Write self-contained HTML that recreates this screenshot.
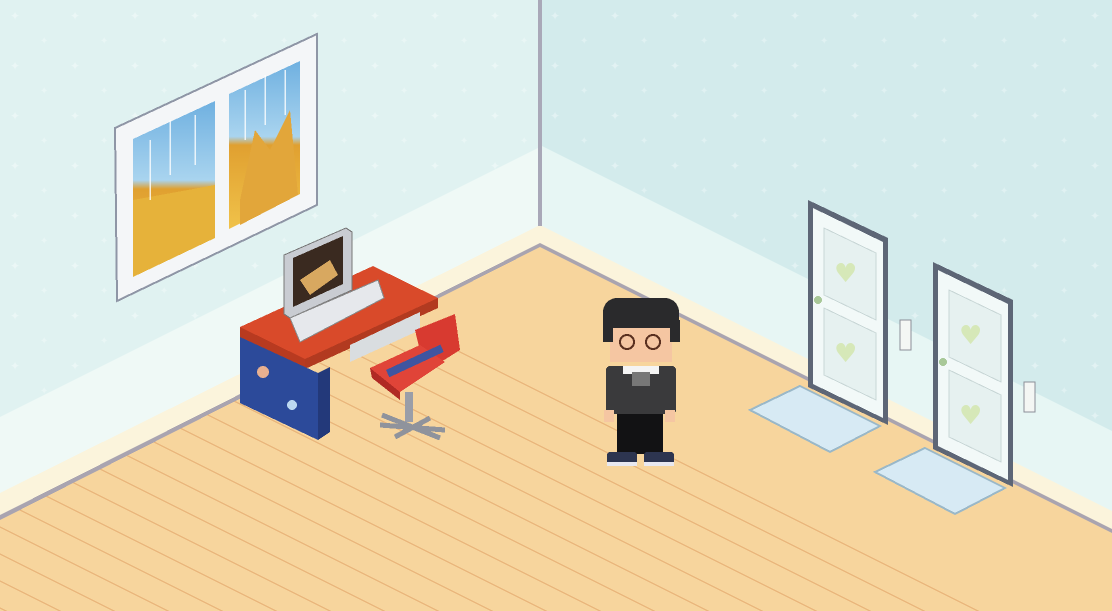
<!DOCTYPE html>
<html><head><meta charset="utf-8"><style>
html,body{margin:0;padding:0;width:1112px;height:611px;overflow:hidden;background:#f7d59d}
svg{display:block;position:absolute;left:0;top:0}
</style></head><body>
<svg width="1112" height="611" viewBox="0 0 1112 611" xmlns="http://www.w3.org/2000/svg" shape-rendering="crispEdges">
<defs>
<pattern id="stars" width="60" height="50" patternUnits="userSpaceOnUse">
<text x="10" y="20" font-size="12" fill="#ffffff" opacity="0.35" font-family="DejaVu Sans">✦</text>
<text x="40" y="44" font-size="10" fill="#ffffff" opacity="0.3" font-family="DejaVu Sans">✦</text>
</pattern>
<linearGradient id="sky" x1="0" y1="0" x2="0" y2="1"><stop offset="0" stop-color="#6fb0e0"/><stop offset="0.45" stop-color="#a9d4ef"/><stop offset="0.5" stop-color="#e0a030"/><stop offset="1" stop-color="#f0c24a"/></linearGradient>
</defs>
<rect x="0" y="0" width="1112" height="611" fill="#f7d59d"/>
<g stroke="#e9b47a" stroke-width="1.5" opacity="0.9">
<path d="M-600 200 L1200 1100 M-600 227 L1200 1127 M-600 254 L1200 1154 M-600 281 L1200 1181 M-600 308 L1200 1208 M-600 335 L1200 1235 M-600 362 L1200 1262 M-600 389 L1200 1289 M-600 416 L1200 1316 M-600 443 L1200 1343 M-600 470 L1200 1370 M-600 497 L1200 1397 M-600 524 L1200 1424 M-600 173 L1200 1073 M-600 146 L1200 1046 M-600 119 L1200 1019 M-600 92 L1200 992 M-600 65 L1200 965 M-600 38 L1200 938 M-600 11 L1200 911 M-600 -16 L1200 884 M-600 -43 L1200 857 M-600 -70 L1200 830 M-600 -97 L1200 803 M-600 -124 L1200 776 M-600 -151 L1200 749 M-600 -178 L1200 722"/>
</g>
<polygon points="0,0 540,0 540,245 0,518" fill="#eff9f6"/>
<polygon points="0,0 540,0 540,147 0,417" fill="#e0f2f1"/>
<polygon points="0,0 540,0 540,147 0,417" fill="url(#stars)"/>
<polygon points="0,493 540,225 540,245 0,518" fill="#fbf4dc"/>
<polygon points="0,515 540,243 540,247 0,520" fill="#a9a4b0"/>
<polygon points="540,0 1112,0 1112,531 540,245" fill="#e7f6f4"/>
<polygon points="540,0 1112,0 1112,431 540,145" fill="#d3ebec"/>
<polygon points="540,0 1112,0 1112,431 540,145" fill="url(#stars)"/>
<polygon points="540,225 1112,511 1112,531 540,245" fill="#fbf4dc"/>
<polygon points="540,243 1112,529 1112,533 540,247" fill="#a9a4b0"/>
<rect x="538" y="0" width="4" height="226" fill="#a9a8b8"/>
<polygon points="115,128 317,34 317,205 117,301" fill="#f4f6f8" stroke="#8f96a6" stroke-width="2"/>
<polygon points="133,139 215,101 215,238 133,277" fill="url(#sky)"/>
<polygon points="229,94 300,61 300,194 229,229" fill="url(#sky)"/>
<polygon points="240,200 255,130 270,150 290,110 298,195 240,225" fill="#e2a63a"/>
<polygon points="133,200 215,185 215,238 133,277" fill="#e6b23a"/>
<g stroke="#ffffff" stroke-width="1.5" opacity="0.8"><path d="M150 140 V200 M170 120 V175 M195 115 V165 M245 90 V140 M265 75 V125 M285 70 V115"/></g>
<polygon points="240,327 373,266 438,298 305,359" fill="#d94a2a"/>
<polygon points="240,327 305,359 305,369 240,337" fill="#b83a20"/>
<polygon points="305,359 438,298 438,308 305,369" fill="#b23a20"/>
<polygon points="240,337 318,373 318,440 240,403" fill="#2c4a9a"/>
<circle cx="263" cy="372" r="6" fill="#e8b090"/>
<circle cx="292" cy="405" r="5" fill="#bcd8f0"/>
<polygon points="318,373 330,367 330,432 318,440" fill="#23397a"/>
<polygon points="350,345 420,312 420,330 350,362" fill="#d9dde0"/>
<polygon points="284,255 346,228 352,232 352,290 290,318 284,314" fill="#c9ccd2" stroke="#777" stroke-width="1"/>
<polygon points="293,258 343,236 343,284 293,307" fill="#3a2a20"/>
<polygon points="300,280 330,260 338,275 310,295" fill="#d8a860"/>
<polygon points="290,318 378,280 384,298 300,342" fill="#e6e8ec" stroke="#888" stroke-width="1"/>
<polygon points="415,330 455,314 460,350 425,372" fill="#d83a30"/>
<polygon points="370,368 420,345 445,362 400,392" fill="#e04438"/>
<polygon points="370,368 400,392 400,400 372,378" fill="#b02a24"/>
<rect x="386" y="370" width="60" height="8" fill="#3f55a0" transform="rotate(-25 386 370)"/>
<rect x="405" y="392" width="8" height="30" fill="#9a9ea8"/>
<path d="M380 425 L445 430 M395 437 L430 418 M382 415 L440 438" stroke="#8f939c" stroke-width="5"/>
<rect x="603" y="298" width="76" height="40" rx="14" fill="#2a2a2c"/>
<rect x="610" y="320" width="62" height="42" fill="#f5c6a2"/>
<rect x="603" y="320" width="10" height="22" fill="#2a2a2c"/>
<rect x="670" y="320" width="10" height="22" fill="#2a2a2c"/>
<rect x="610" y="318" width="62" height="10" fill="#2a2a2c"/>
<circle cx="627" cy="342" r="7" fill="none" stroke="#5a3020" stroke-width="2"/>
<circle cx="653" cy="342" r="7" fill="none" stroke="#5a3020" stroke-width="2"/>
<rect x="606" y="366" width="70" height="48" rx="4" fill="#3a3a3c"/>
<rect x="623" y="366" width="36" height="8" fill="#f4f4f4"/>
<rect x="632" y="372" width="18" height="14" fill="#777"/>
<rect x="604" y="410" width="10" height="12" fill="#f5c6a2"/>
<rect x="665" y="410" width="10" height="12" fill="#f5c6a2"/>
<rect x="617" y="414" width="46" height="40" fill="#121214"/>
<rect x="607" y="452" width="30" height="14" rx="3" fill="#2d3550"/>
<rect x="644" y="452" width="30" height="14" rx="3" fill="#2d3550"/>
<rect x="607" y="462" width="30" height="4" fill="#e8e8f0"/>
<rect x="644" y="462" width="30" height="4" fill="#e8e8f0"/>
<polygon points="750,410 800,386 880,426 830,452" fill="#d7eaf4" stroke="#9ab8c8" stroke-width="2"/>
<polygon points="875,472 925,448 1005,488 955,514" fill="#d7eaf4" stroke="#9ab8c8" stroke-width="2"/>
<g id="door">
<polygon points="808,200 888,238 888,425 808,387" fill="#5d6676"/>
<polygon points="813,208 883,242 883,418 813,384" fill="#f2f9f8"/>
<polygon points="824,228 876,253 876,320 824,295" fill="#e6f1f0" stroke="#c8d6d6"/>
<polygon points="824,308 876,333 876,400 824,375" fill="#e6f1f0" stroke="#c8d6d6"/>
<text x="834" y="282" font-size="26" fill="#d6e8b8" font-family="DejaVu Sans">♥</text>
<text x="834" y="362" font-size="26" fill="#d6e8b8" font-family="DejaVu Sans">♥</text>
<circle cx="818" cy="300" r="4" fill="#a8c898"/>
</g>
<use href="#door" x="125" y="62"/>
<rect x="900" y="320" width="11" height="30" fill="#f4f6f4" stroke="#8b8f98"/>
<rect x="1024" y="382" width="11" height="30" fill="#f4f6f4" stroke="#8b8f98"/>
</svg>
</body></html>
